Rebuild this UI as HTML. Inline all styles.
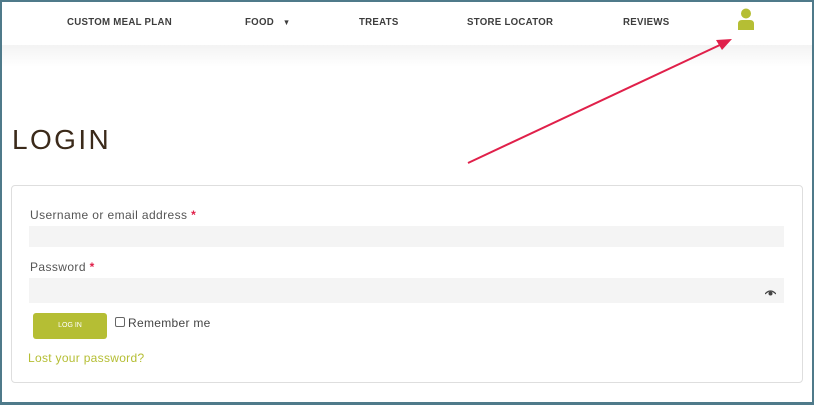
<!DOCTYPE html>
<html><head><meta charset="utf-8"><style>
*{margin:0;padding:0;box-sizing:border-box}
body{width:814px;height:405px;background:#fff;font-family:"Liberation Sans",sans-serif;position:relative;overflow:hidden}
.frame{position:absolute;left:0;top:0;width:814px;height:405px;border:2px solid #4f7a8a;border-bottom-width:3px;border-right-width:2px}
.nav{position:absolute;top:0;left:0;width:814px;height:45px}
.nav span{position:absolute;top:16px;font-size:10.5px;font-weight:bold;letter-spacing:.3px;color:#3d3d3d;transform:scaleX(.92);transform-origin:left}
.band{position:absolute;top:45px;left:2px;width:810px;height:22px;background:linear-gradient(#f3f3f3,#fff)}
h1{position:absolute;left:12px;top:124px;font-size:28px;font-weight:normal;letter-spacing:2.4px;color:#3b2a1a}
.box{position:absolute;left:11px;top:185px;width:792px;height:198px;border:1px solid #dedede;border-radius:4px}
.lbl{position:absolute;left:30px;font-size:12px;color:#555;letter-spacing:.4px}
.lbl b{color:#e0204a}
.inp{position:absolute;left:29px;width:755px;background:#f4f4f4}
.btn{position:absolute;left:33px;top:313px;width:74px;height:26px;background:#b5be34;border-radius:3px;color:#fff;font-size:7px;text-align:center;line-height:26px}
.cb{position:absolute;left:115px;top:317px;width:10px;height:10px;border:1px solid #666;border-radius:2px}
.rem{position:absolute;left:128px;top:316px;font-size:12px;color:#444;letter-spacing:.3px}
.lost{position:absolute;left:28px;top:351px;font-size:12px;color:#b5be34;letter-spacing:.3px}
</style></head><body>
<div class="nav">
<span style="left:67px">CUSTOM MEAL PLAN</span>
<span style="left:245px">FOOD &nbsp;&nbsp;<span style="position:static;font-size:8px">▼</span></span>
<span style="left:359px">TREATS</span>
<span style="left:467px">STORE LOCATOR</span>
<span style="left:623px">REVIEWS</span>
<svg style="position:absolute;left:737px;top:8px" width="18" height="22" viewBox="0 0 18 22"><circle cx="9" cy="5.5" r="5" fill="#b5be34"/><path d="M1 22V16Q1 12 5 12H13Q17 12 17 16V22Z" fill="#b5be34"/></svg>
</div>
<div class="band"></div>
<h1>LOGIN</h1>
<div class="box"></div>
<div class="lbl" style="top:208px">Username or email address <b>*</b></div>
<div class="inp" style="top:226px;height:21px"></div>
<div class="lbl" style="top:260px">Password <b>*</b></div>
<div class="inp" style="top:278px;height:25px"></div>
<svg style="position:absolute;left:765px;top:290px" width="11" height="6" viewBox="0 0 11 6"><path d="M0 4Q5.5-2 11 4" fill="none" stroke="#444" stroke-width="1.2"/><circle cx="5.5" cy="3.5" r="2" fill="#444"/></svg>
<div class="btn">LOG IN</div>
<div class="cb"></div>
<div class="rem">Remember me</div>
<div class="lost">Lost your password?</div>
<svg style="position:absolute;left:0;top:0" width="814" height="405"><line x1="468" y1="163" x2="722" y2="44" stroke="#e0204a" stroke-width="2"/><path d="M732 39L716 40L722 50Z" fill="#e0204a"/></svg>
<div class="frame"></div>
</body></html>
